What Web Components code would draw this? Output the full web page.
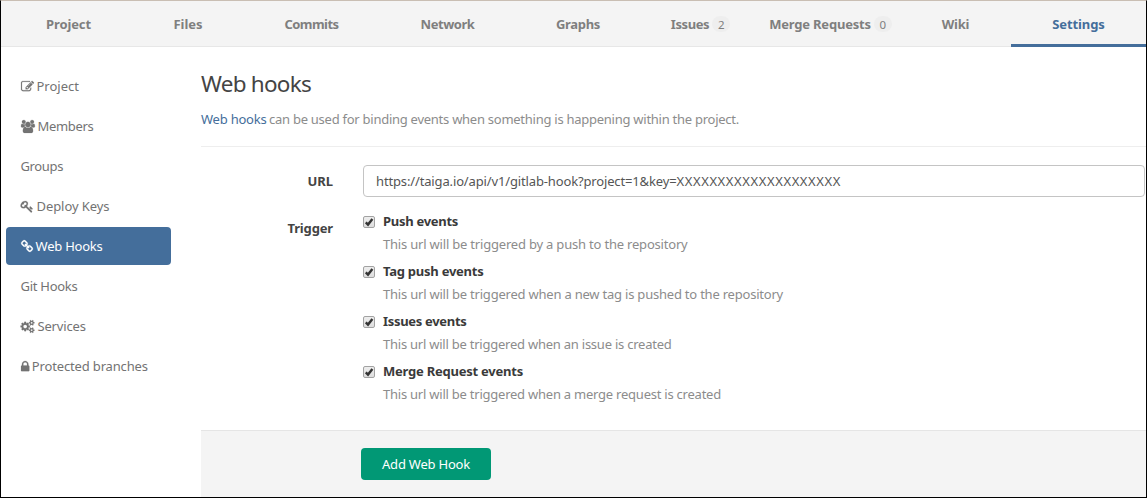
<!DOCTYPE html>
<html lang="en">
<head>
<meta charset="utf-8">
<title>Web hooks</title>
<style>
html,body{margin:0;height:100%;background:#fff}
body{font:13px/20px "Noto Sans","Open Sans",sans-serif;color:#737373;overflow:hidden}
</style>
</head>
<body>
<gl-page>
  <gl-nav slot="nav">
    <gl-tab style="width:127px"><gl-text w="45">Project</gl-text></gl-tab>
    <gl-tab style="width:112px"><gl-text w="29">Files</gl-text></gl-tab>
    <gl-tab style="width:135px"><gl-text w="54">Commits</gl-text></gl-tab>
    <gl-tab style="width:137px"><gl-text w="54">Network</gl-text></gl-tab>
    <gl-tab style="width:124px"><gl-text w="44">Graphs</gl-text></gl-tab>
    <gl-tab style="width:121px" count="2"><gl-text w="38.5">Issues</gl-text></gl-tab>
    <gl-tab style="width:139px" count="0"><gl-text w="101.5">Merge Requests</gl-text></gl-tab>
    <gl-tab style="width:111px"><gl-text w="27.5">Wiki</gl-text></gl-tab>
    <gl-tab style="width:135px" active><gl-text w="52.5">Settings</gl-text></gl-tab>
  </gl-nav>
  <gl-sidebar slot="sidebar">
    <gl-link icon="edit"><gl-text w="42.5">Project</gl-text></gl-link>
    <gl-link icon="users"><gl-text w="56">Members</gl-text></gl-link>
    <gl-link><gl-text w="42.5">Groups</gl-text></gl-link>
    <gl-link icon="key"><gl-text w="73">Deploy Keys</gl-text></gl-link>
    <gl-link icon="link" active><gl-text w="67">Web Hooks</gl-text></gl-link>
    <gl-link><gl-text w="57">Git Hooks</gl-text></gl-link>
    <gl-link icon="cogs"><gl-text w="48.5">Services</gl-text></gl-link>
    <gl-link icon="lock"><gl-text w="116">Protected branches</gl-text></gl-link>
  </gl-sidebar>
  <gl-heading>
    <gl-text w="110" slot="title">Web hooks</gl-text>
    <gl-text w="65.5" slot="link">Web hooks</gl-text>
    <gl-text w="470">can be used for binding events when something is happening within the project.</gl-text>
  </gl-heading>
  <gl-field class="url">
    <gl-text w="25.5" slot="label">URL</gl-text>
    <gl-input><gl-text w="300.5">https://taiga.io/api/v1/gitlab-hook?project=1&amp;key=</gl-text><gl-text w="164.5">XXXXXXXXXXXXXXXXXXXX</gl-text></gl-input>
  </gl-field>
  <gl-field class="trigger">
    <gl-text w="45.5" slot="label">Trigger</gl-text>
    <gl-check><gl-text w="75" slot="name">Push events</gl-text><gl-text w="304.5">This url will be triggered by a push to the repository</gl-text></gl-check>
    <gl-check><gl-text w="100.5" slot="name">Tag push events</gl-text><gl-text w="400">This url will be triggered when a new tag is pushed to the repository</gl-text></gl-check>
    <gl-check><gl-text w="83.5" slot="name">Issues events</gl-text><gl-text w="288.5">This url will be triggered when an issue is created</gl-text></gl-check>
    <gl-check><gl-text w="140" slot="name">Merge Request events</gl-text><gl-text w="338">This url will be triggered when a merge request is created</gl-text></gl-check>
  </gl-field>
  <gl-button slot="footer"><gl-text w="88">Add Web Hook</gl-text></gl-button>
</gl-page>
<script>
const define = (name, markup, setup) => customElements.define(name, class extends HTMLElement {
  constructor() {
    super();
    this.attachShadow({mode: 'open'}).innerHTML = markup;
  }
  connectedCallback() { if (setup) setup(this, this.shadowRoot); }
});

define('gl-page', `<style>
:host{display:flex;flex-direction:column;box-sizing:border-box;height:498px;width:1147px;border:1px solid #000;border-top-color:#c9beb3;background:#fff}
.body{display:flex;flex:1;min-height:0}
aside{width:200px;flex:none}
main{flex:1;display:flex;flex-direction:column;min-width:0}
footer{margin-top:auto;height:66px;box-sizing:content-box;border-top:1px solid #e5e5e5;background:#f4f4f4;padding-left:160px;display:flex;align-items:center}
</style><slot name="nav"></slot><div class="body"><aside><slot name="sidebar"></slot></aside><main><slot></slot><footer><slot name="footer"></slot></footer></main></div>`);

define('gl-nav', `<style>:host{display:flex;height:46px;box-sizing:border-box;padding-left:4px;background:#f4f4f4;box-shadow:inset 0 -1px #e7e7e7;flex:none}</style><slot></slot>`);

define('gl-tab', `<style>
:host{display:flex;box-sizing:border-box;align-items:center;justify-content:center;flex:none;font-weight:700;color:#7f7f7f;padding-top:3px;border-bottom:3px solid transparent}
:host([active]){color:#446e9b;border-bottom-color:#446e9b}
.n{margin-left:3px;width:18px;height:16px;border-radius:8px;background:#eee;font:11.5px/17px "Noto Sans",sans-serif;text-align:center;color:#7f7f7f}
</style><slot></slot>`, (el, root) => {
  if (el.hasAttribute('count')) {
    const n = document.createElement('span');
    n.className = 'n';
    n.textContent = el.getAttribute('count');
    root.append(n);
  }
});

define('gl-sidebar', `<style>:host{display:flex;flex-direction:column;gap:2px;padding:20px 30px 0 5px}</style><slot></slot>`);

const icons = {
  edit: ['0 0 1792 1792', 'M888 1184l116-116-152-152-116 116v56h96v96h56zm440-720q-16-16-33 1l-350 350q-17 17-1 33t33-1l350-350q17-17 1-33zm80 594v190q0 119-84.5 203.5t-203.5 84.5h-832q-119 0-203.5-84.5t-84.5-203.5v-832q0-119 84.5-203.5t203.5-84.5h832q63 0 117 25 15 7 18 23 3 17-9 29l-49 49q-14 14-32 8-23-6-45-6h-832q-66 0-113 47t-47 113v832q0 66 47 113t113 47h832q66 0 113-47t47-113v-126q0-13 9-22l64-64q15-15 35-7t20 29zm-96-738l288 288-672 672h-288v-288zm444 132l-92 92-288-288 92-92q28-28 68-28t68 28l152 152q28 28 28 68t-28 68z'],
  users: ['0 0 1920 1792', 'M593 896q-162 5-265 128h-134q-82 0-138-40.5t-56-118.5q0-353 124-353 6 0 43.5 21t97.5 42.5 119 21.5q67 0 133-23-5 37-5 66 0 139 81 256zm1071 637q0 120-73 189.5t-194 69.5h-874q-121 0-194-69.5t-73-189.5q0-53 3.5-103.5t14-109 26.5-108.5 43-97.5 62-81 85.5-53.5 111.5-20q10 0 43 21.5t73 48 107 48 135 21.5 135-21.5 107-48 73-48 43-21.5q61 0 111.5 20t85.5 53.5 62 81 43 97.5 26.5 108.5 14 109 3.5 103.5zm-1024-1277q0 106-75 181t-181 75-181-75-75-181 75-181 181-75 181 75 75 181zm704 384q0 159-112.5 271.5t-271.5 112.5-271.5-112.5-112.5-271.5 112.5-271.5 271.5-112.5 271.5 112.5 112.5 271.5zm576 225q0 78-56 118.5t-138 40.5h-134q-103-123-265-128 81-117 81-256 0-29-5-66 66 23 133 23 59 0 119-21.5t97.5-42.5 43.5-21q124 0 124 353zm-128-609q0 106-75 181t-181 75-181-75-75-181 75-181 181-75 181 75 75 181z'],
  key: ['64 0 1792 1792', 'M832 512q0-80-56-136t-136-56-136 56-56 136q0 42 19 83-41-19-83-19-80 0-136 56t-56 136 56 136 136 56 136-56 56-136q0-42-19-83 41 19 83 19 80 0 136-56t56-136zm851 704q0 17-49 66t-66 49q-9 0-28.5-16t-36.5-33-38.5-40-24.5-26l-96 96 220 220q28 28 28 68 0 42-39 81t-81 39q-40 0-68-28l-671-671q-176 131-365 131-163 0-265.5-102.5t-102.5-265.5q0-160 95-313t248-248 313-95q163 0 265.5 102.5t102.5 265.5q0 189-131 365l355 355 96-96q-3-3-26-24.5t-40-38.5-33-36.5-16-28.5q0-17 49-66t66-49q13 0 23 10 6 6 46 44.5t82 79.5 86.5 86 73 78 28.5 41z'],
  link: ['64 0 1664 1792', 'M1520 1216q0-40-28-68l-208-208q-28-28-68-28-42 0-72 32 3 3 19 18.5t21.5 21.5 15 19 13 25.5 3.5 27.5q0 40-28 68t-68 28q-15 0-27.5-3.5t-25.5-13-19-15-21.5-21.5-18.5-19q-33 31-33 73 0 40 28 68l206 207q27 27 68 27 40 0 68-26l147-146q28-28 28-67zm-703-705q0-40-28-68l-206-207q-28-28-68-28-39 0-68 27l-147 146q-28 28-28 67 0 40 28 68l208 208q27 27 68 27 42 0 72-31-3-3-19-18.5t-21.5-21.5-15-19-13-25.5-3.5-27.5q0-40 28-68t68-28q15 0 27.5 3.5t25.5 13 19 15 21.5 21.5 18.5 19q33-31 33-73zm895 705q0 120-85 203l-147 146q-83 83-203 83-121 0-204-85l-206-207q-83-83-83-203 0-123 88-209l-88-88q-86 88-208 88-120 0-204-84l-208-208q-84-84-84-204t85-203l147-146q83-83 203-83 121 0 204 85l206 207q83 83 83 203 0 123-88 209l88 88q86-88 208-88 120 0 204 84l208 208q84 84 84 204z'],
  cogs: ['0 0 1920 1792', 'M832 896q0-106-75-181t-181-75-181 75-75 181 75 181 181 75 181-75 75-181zm768 512q0-52-38-90t-90-38-90 38-38 90q0 53 37.5 90.5t90.5 37.5 90.5-37.5 37.5-90.5zm0-1024q0-52-38-90t-90-38-90 38-38 90q0 53 37.5 90.5t90.5 37.5 90.5-37.5 37.5-90.5zm-384 421v185q0 10-7 19.5t-16 10.5l-155 24q-11 35-32 76 34 48 90 115 7 11 7 20 0 12-7 19-23 30-82.5 89.5t-78.5 59.5q-11 0-21-7l-115-90q-37 19-77 31-11 108-23 155-7 24-30 24h-186q-11 0-20-7.5t-10-17.5l-23-153q-34-10-75-31l-118 89q-7 7-20 7-11 0-21-8-144-133-144-160 0-9 7-19 10-14 41-53t47-61q-23-44-35-82l-152-24q-10-1-17-9.5t-7-19.5v-185q0-10 7-19.5t16-10.5l155-24q11-35 32-76-34-48-90-115-7-11-7-20 0-12 7-20 22-30 82-89t79-59q11 0 21 7l115 90q34-18 77-32 11-108 23-154 7-24 30-24h186q11 0 20 7.5t10 17.5l23 153q34 10 75 31l118-89q8-7 20-7 11 0 21 8 144 133 144 160 0 8-7 19-12 16-42 54t-45 60q23 48 34 82l152 23q10 2 17 10.5t7 19.5zm640 533v140q0 16-149 31-12 27-30 52 51 113 51 138 0 4-4 7-122 71-124 71-8 0-46-47t-52-68q-20 2-30 2t-30-2q-14 21-52 68t-46 47q-2 0-124-71-4-3-4-7 0-25 51-138-18-25-30-52-149-15-149-31v-140q0-16 149-31 13-29 30-52-51-113-51-138 0-4 4-7 4-2 35-20t59-34 30-16q8 0 46 46.5t52 67.5q20-2 30-2t30 2q51-71 92-112l6-2q4 0 124 70 4 3 4 7 0 25-51 138 17 23 30 52 149 15 149 31zm0-1024v140q0 16-149 31-12 27-30 52 51 113 51 138 0 4-4 7-122 71-124 71-8 0-46-47t-52-68q-20 2-30 2t-30-2q-14 21-52 68t-46 47q-2 0-124-71-4-3-4-7 0-25 51-138-18-25-30-52-149-15-149-31v-140q0-16 149-31 13-29 30-52-51-113-51-138 0-4 4-7 4-2 35-20t59-34 30-16q8 0 46 46.5t52 67.5q20-2 30-2t30 2q51-71 92-112l6-2q4 0 124 70 4 3 4 7 0 25-51 138 17 23 30 52 149 15 149 31z'],
  lock: ['320 0 1152 1792', 'M640 768h512v-192q0-106-75-181t-181-75-181 75-75 181v192zm832 96v576q0 40-28 68t-68 28h-960q-40 0-68-28t-28-68v-576q0-40 28-68t68-28h32v-192q0-184 132-316t316-132 316 132 132 316v192h32q40 0 68 28t28 68z']
};

define('gl-link', `<style>
:host{display:flex;align-items:center;height:38px;box-sizing:border-box;padding-left:14.5px;border-radius:4px}
:host([active]){background:#446e9b;color:#fff}
svg{height:13px;fill:currentColor;stroke:currentColor;stroke-width:25;overflow:visible;margin-right:3px;flex:none}
</style><slot></slot>`, (el, root) => {
  const icon = icons[el.getAttribute('icon')];
  if (!icon) return;
  const width = icon[0].split(' ')[2] / 1792 * 13;
  root.querySelector('slot').insertAdjacentHTML('beforebegin', `<svg viewBox="${icon[0]}" width="${width}"><path d="${icon[1]}"/></svg>`);
});

define('gl-heading', `<style>
:host{display:block;height:99px;border-bottom:1px solid #eee;color:#8c8c8c}
h3{margin:0;padding-top:21px;font-size:22.5px;line-height:32px;font-weight:400;color:#444}
p{margin:9px 0 0;display:flex;gap:2.5px}
a{color:#446e9b}
</style><h3><slot name="title"></slot></h3><p><a><slot name="link"></slot></a><slot></slot></p>`);

define('gl-field', `<style>
:host{display:flex;margin-top:18px}
:host(.trigger){margin-top:14px}
.label{width:132px;flex:none;text-align:right;font-weight:700;color:#444;padding-top:7px}
:host(.url) .label{padding-top:6px}
.value{flex:1;padding-left:30px;min-width:0}
</style><div class="label"><slot name="label"></slot></div><div class="value"><slot></slot></div>`);

define('gl-input', `<style>:host{display:flex;align-items:center;box-sizing:border-box;height:32px;margin-right:1px;border:1px solid #c4c4c4;border-radius:4px;padding-left:12px;color:#555}</style><slot></slot>`);

define('gl-check', `<style>
:host{display:grid;grid-template-columns:20px 1fr;grid-template-rows:23px 27px;color:#8c8c8c}
i{box-sizing:border-box;width:12px;height:12px;margin-top:5px;border:1px solid #a2a2a2;border-radius:2px;background:linear-gradient(#eee,#ddd);display:block}
svg{display:block;width:10px;height:10px}
b{color:#3a3a3a}
span{grid-column:2}
</style><i><svg viewBox="0 0 10 10"><path d="M1.8 5.4 4 7.6 8.4 2" fill="none" stroke="#333" stroke-width="2.4"/></svg></i><b><slot name="name"></slot></b><span><slot></slot></span>`);

define('gl-button', `<style>:host{display:flex;align-items:center;justify-content:center;width:130px;height:32px;border-radius:4px;background:#019875;color:#fff}</style><slot></slot>`);

/* One line of text, tracked to a given measure. */
define('gl-text', `<style>:host{display:inline-block;white-space:nowrap}</style><slot></slot>`, el => {
  const natural = el.getBoundingClientRect().width;
  el.style.letterSpacing = ((el.getAttribute('w') - natural) / el.textContent.length).toFixed(3) + 'px';
});
</script>
</body>
</html>
